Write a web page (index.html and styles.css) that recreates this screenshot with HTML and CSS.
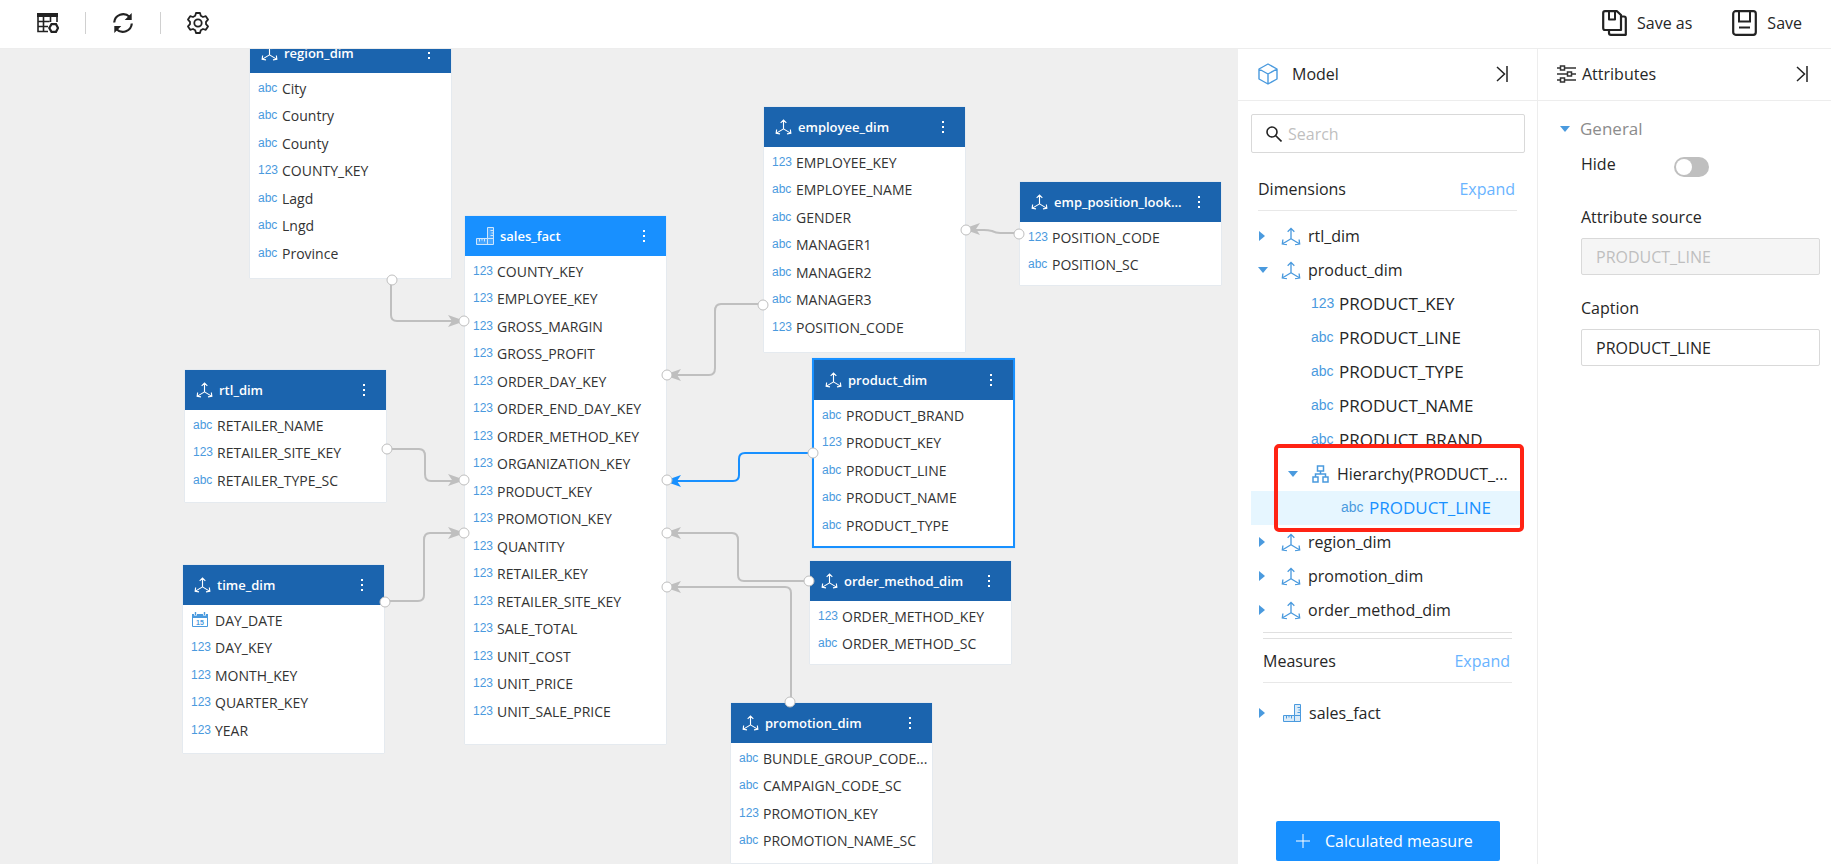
FILE: index.html
```html
<!DOCTYPE html>
<html lang="en">
<head>
<meta charset="utf-8">
<title>Data model editor</title>
<link rel="stylesheet" href="styles.css">
</head>
<body>
<svg class="sprite" aria-hidden="true">
  <symbol id="axis" viewBox="0 0 18 17"><path d="M9 10.500V1.500M9 10.500L1.500 15M9 10.500L16.500 15M6 4.200L9 1.200L12 4.200M1.700 11.200L1.200 15.200L5.300 15.800M16.300 11.200L16.800 15.200L12.700 15.800"/></symbol>
  <symbol id="ruler" viewBox="0 0 18 18"><path class="soft" d="M11.500 .5H17.500V17.500H.5V11.500H11.500Z"/><path d="M11.500 .5H17.500V17.500H.5V11.500H11.500ZM11.500 11.500H17M11.500 11.500V17M14.500 3.500H17M15.500 6H17M14.500 8.500H17M3.500 12V14.500M6 12V13.500M8.500 12V14.500"/></symbol>
  <symbol id="collapse" viewBox="0 0 12 16"><path d="M1 1L8.500 8L1 15M11 0V16"/></symbol>
  <symbol id="more" viewBox="0 0 4 14"><path d="M1 1H3V3H1ZM1 6H3V8H1ZM1 11H3V13H1Z"/></symbol>
</svg>

<header class="topbar">
  <div class="tools">
    <button class="tool" aria-label="Table settings"><svg class="icon-tool" viewBox="0 0 22 22"><path fill="#222" d="M0 1H21V5H0Z"/><path fill="none" stroke="#222" stroke-width="1.600" d="M1 4V19.500H11M6.500 5V19.500M13.500 5V10M20 5V10M1 9.500H12.500M1 14.500H11"/><path fill="none" stroke="#222" stroke-width="2.200" d="M14.500 12.200H19L21 16L19 19.800H14.500L12.300 16Z"/></svg></button>
    <button class="tool" aria-label="Refresh"><svg class="icon-tool" viewBox="0 0 22 22"><path fill="none" stroke="#222" stroke-width="2.200" d="M2.200 10.500A9 9 0 0 1 17.500 4.800M19.800 11.500A9 9 0 0 1 4.500 17.200"/><path fill="#222" d="M19.700 1V8H12.700ZM2.300 21V14H9.300Z"/></svg></button>
    <button class="tool" aria-label="Settings"><svg class="icon-tool" viewBox="0 0 22 22"><path fill="none" stroke="#222" stroke-width="1.800" stroke-linejoin="round" d="M9 1H13L13.800 3.800L16 5L18.800 4.200L21 7.600L19 9.800V12.200L21 14.400L18.800 17.800L16 17L13.800 18.200L13 21H9L8.200 18.200L6 17L3.200 17.800L1 14.400L3 12.200V9.800L1 7.600L3.200 4.200L6 5L8.200 3.800Z"/><circle cx="11" cy="11" r="3.700" fill="none" stroke="#222" stroke-width="1.800"/></svg></button>
  </div>
  <div class="saves">
    <button class="save"><svg class="icon-save" viewBox="0 0 25 26" fill="none" stroke="#222" stroke-width="2.200" stroke-linejoin="round"><path d="M3 1.200H15L19 5V20H3Q1.200 20 1.200 18V3Q1.200 1.200 3 1.200Z"/><path stroke-width="2" d="M7 2V9.500H13V2"/><path d="M19.500 6.500H22Q23.800 6.500 23.800 8.500V24.800H9Q7 24.800 7 23V20.500"/></svg>Save as</button>
    <button class="save"><svg class="icon-save" viewBox="0 0 25 26" fill="none" stroke="#222" stroke-width="2.200"><rect x="1.200" y="1.200" width="22.600" height="23.600" rx="2.500"/><path stroke-width="2" d="M7 2V11.500H18V2M7 17.500H18"/></svg>Save</button>
  </div>
</header>

<div class="workspace">
  <main class="canvas">
    <svg class="links" aria-hidden="true">
      <g class="link">
        <path d="M391 230V266Q391 272 397 272H460"/>
        <path d="M387 400H419Q425 400 425 407V425Q425 432 431 432H460"/>
        <path d="M385 552H418Q424 552 424 546V491Q424 484 430 484H460"/>
        <path d="M763 255H721Q715 255 715 262V319Q715 326 709 326H671"/>
        <path d="M809 532H744Q738 532 738 526V491Q738 484 732 484H671"/>
        <path d="M791 653V544Q791 538 785 538H671"/>
        <path d="M1019 184H1000Q996 184 992 182Q988 181 984 181H970"/>
      </g>
      <path class="link link-active" d="M812 404H745Q739 404 739 410V426Q739 432 733 432H671"/>
      <g class="arrow">
        <path d="M448 266L465 272L448 278L452 272Z"/>
        <path d="M448 425L465 431L448 437L452 431Z"/>
        <path d="M448 478L465 484L448 490L452 484Z"/>
        <path d="M681 320L664 326L681 332L677 326Z"/>
        <path d="M681 478L664 484L681 490L677 484Z"/>
        <path d="M681 532L664 538L681 544L677 538Z"/>
        <path d="M980 174L963 180L980 186L976 180Z"/>
      </g>
      <path class="arrow arrow-active" d="M681 426L664 432L681 438L677 432Z"/>
    </svg>

    <section class="node at-region">
      <h2 class="node-head"><svg class="icon-axis"><use href="#axis"/></svg><span class="node-name">region_dim</span><button class="more" aria-label="More"><svg class="icon-more"><use href="#more"/></svg></button></h2>
      <ul class="fields">
        <li><i>abc</i>City</li><li><i>abc</i>Country</li><li><i>abc</i>County</li><li><i>123</i>COUNTY_KEY</li><li><i>abc</i>Lagd</li><li><i>abc</i>Lngd</li><li><i>abc</i>Province</li>
      </ul>
    </section>

    <section class="node at-rtl">
      <h2 class="node-head"><svg class="icon-axis"><use href="#axis"/></svg><span class="node-name">rtl_dim</span><button class="more" aria-label="More"><svg class="icon-more"><use href="#more"/></svg></button></h2>
      <ul class="fields">
        <li><i>abc</i>RETAILER_NAME</li><li><i>123</i>RETAILER_SITE_KEY</li><li><i>abc</i>RETAILER_TYPE_SC</li>
      </ul>
    </section>

    <section class="node at-time">
      <h2 class="node-head"><svg class="icon-axis"><use href="#axis"/></svg><span class="node-name">time_dim</span><button class="more" aria-label="More"><svg class="icon-more"><use href="#more"/></svg></button></h2>
      <ul class="fields">
        <li><i><svg class="icon-date" viewBox="0 0 18 15"><path fill="#4a9ade" d="M1 2H17V6H1Z"/><path fill="none" stroke="#4a9ade" d="M1.500 2.500H16.500V14.500H1.500Z"/><path stroke="#fff" stroke-width="3" d="M4.500 0V3.500M13.500 0V3.500"/><path stroke="#4a9ade" stroke-width="1.400" d="M4.500 0V3M13.500 0V3"/><text x="9" y="12.500" text-anchor="middle" class="date-num">15</text></svg></i>DAY_DATE</li><li><i>123</i>DAY_KEY</li><li><i>123</i>MONTH_KEY</li><li><i>123</i>QUARTER_KEY</li><li><i>123</i>YEAR</li>
      </ul>
    </section>

    <section class="node node-fact at-sales">
      <h2 class="node-head"><svg class="icon-ruler"><use href="#ruler"/></svg><span class="node-name">sales_fact</span><button class="more" aria-label="More"><svg class="icon-more"><use href="#more"/></svg></button></h2>
      <ul class="fields">
        <li><i>123</i>COUNTY_KEY</li><li><i>123</i>EMPLOYEE_KEY</li><li><i>123</i>GROSS_MARGIN</li><li><i>123</i>GROSS_PROFIT</li><li><i>123</i>ORDER_DAY_KEY</li><li><i>123</i>ORDER_END_DAY_KEY</li><li><i>123</i>ORDER_METHOD_KEY</li><li><i>123</i>ORGANIZATION_KEY</li><li><i>123</i>PRODUCT_KEY</li><li><i>123</i>PROMOTION_KEY</li><li><i>123</i>QUANTITY</li><li><i>123</i>RETAILER_KEY</li><li><i>123</i>RETAILER_SITE_KEY</li><li><i>123</i>SALE_TOTAL</li><li><i>123</i>UNIT_COST</li><li><i>123</i>UNIT_PRICE</li><li><i>123</i>UNIT_SALE_PRICE</li>
      </ul>
    </section>

    <section class="node at-employee">
      <h2 class="node-head"><svg class="icon-axis"><use href="#axis"/></svg><span class="node-name">employee_dim</span><button class="more" aria-label="More"><svg class="icon-more"><use href="#more"/></svg></button></h2>
      <ul class="fields">
        <li><i>123</i>EMPLOYEE_KEY</li><li><i>abc</i>EMPLOYEE_NAME</li><li><i>abc</i>GENDER</li><li><i>abc</i>MANAGER1</li><li><i>abc</i>MANAGER2</li><li><i>abc</i>MANAGER3</li><li><i>123</i>POSITION_CODE</li>
      </ul>
    </section>

    <section class="node at-position">
      <h2 class="node-head"><svg class="icon-axis"><use href="#axis"/></svg><span class="node-name">emp_position_look...</span><button class="more" aria-label="More"><svg class="icon-more"><use href="#more"/></svg></button></h2>
      <ul class="fields">
        <li><i>123</i>POSITION_CODE</li><li><i>abc</i>POSITION_SC</li>
      </ul>
    </section>

    <section class="node node-selected at-product">
      <h2 class="node-head"><svg class="icon-axis"><use href="#axis"/></svg><span class="node-name">product_dim</span><button class="more" aria-label="More"><svg class="icon-more"><use href="#more"/></svg></button></h2>
      <ul class="fields">
        <li><i>abc</i>PRODUCT_BRAND</li><li><i>123</i>PRODUCT_KEY</li><li><i>abc</i>PRODUCT_LINE</li><li><i>abc</i>PRODUCT_NAME</li><li><i>abc</i>PRODUCT_TYPE</li>
      </ul>
    </section>

    <section class="node at-order">
      <h2 class="node-head"><svg class="icon-axis"><use href="#axis"/></svg><span class="node-name">order_method_dim</span><button class="more" aria-label="More"><svg class="icon-more"><use href="#more"/></svg></button></h2>
      <ul class="fields">
        <li><i>123</i>ORDER_METHOD_KEY</li><li><i>abc</i>ORDER_METHOD_SC</li>
      </ul>
    </section>

    <section class="node at-promotion">
      <h2 class="node-head"><svg class="icon-axis"><use href="#axis"/></svg><span class="node-name">promotion_dim</span><button class="more" aria-label="More"><svg class="icon-more"><use href="#more"/></svg></button></h2>
      <ul class="fields">
        <li><i>abc</i>BUNDLE_GROUP_CODE...</li><li><i>abc</i>CAMPAIGN_CODE_SC</li><li><i>123</i>PROMOTION_KEY</li><li><i>abc</i>PROMOTION_NAME_SC</li>
      </ul>
    </section>

    <svg class="links ports" aria-hidden="true">
      <circle cx="392" cy="231" r="5"/><circle cx="464" cy="272" r="5"/>
      <circle cx="387" cy="400" r="5"/><circle cx="464" cy="431" r="5"/>
      <circle cx="385" cy="553" r="5"/><circle cx="464" cy="484" r="5"/>
      <circle cx="763" cy="256" r="5"/><circle cx="667" cy="326" r="5"/>
      <circle cx="813" cy="404" r="5"/><circle cx="667" cy="431" r="5"/>
      <circle cx="809" cy="532" r="5"/><circle cx="667" cy="484" r="5"/>
      <circle cx="790" cy="653" r="5"/><circle cx="667" cy="538" r="5"/>
      <circle cx="1019" cy="185" r="5"/><circle cx="966" cy="181" r="5"/>
    </svg>
  </main>

  <aside class="panel model">
    <div class="panel-head">
      <svg class="icon-cube" viewBox="0 0 20 22"><path d="M10 1L19 6V16L10 21L1 16V6ZM1 6L10 11L19 6M10 11V21"/></svg>
      <h2 class="panel-title model-title">Model</h2>
      <button class="collapse" aria-label="Collapse model"><svg class="icon-collapse"><use href="#collapse"/></svg></button>
    </div>
    <div class="model-body">
      <label class="search"><svg class="icon-search" viewBox="0 0 16 16"><circle cx="6" cy="6" r="5"/><path d="M9.500 9.500L15.500 15.500"/></svg><input type="text" placeholder="Search" aria-label="Search"></label>
      <div class="group-head"><h3>Dimensions</h3><a href="#dimensions">Expand</a></div>
      <ul class="tree" id="dimensions">
        <li class="row"><button class="caret" aria-label="Open rtl_dim"></button><svg class="icon-axis"><use href="#axis"/></svg><span>rtl_dim</span></li>
        <li class="row"><button class="caret caret-open" aria-label="Close product_dim"></button><svg class="icon-axis"><use href="#axis"/></svg><span>product_dim</span></li>
        <li class="row leaf"><i>123</i><span>PRODUCT_KEY</span></li>
        <li class="row leaf"><i>abc</i><span>PRODUCT_LINE</span></li>
        <li class="row leaf"><i>abc</i><span>PRODUCT_TYPE</span></li>
        <li class="row leaf"><i>abc</i><span>PRODUCT_NAME</span></li>
        <li class="row leaf"><i>abc</i><span>PRODUCT_BRAND</span></li>
        <li class="marked">
          <div class="row nested"><button class="caret caret-open" aria-label="Close hierarchy"></button><svg class="icon-tree" viewBox="0 0 17 18"><path d="M5.500 1H11.500V6H5.500ZM1 12H6V17H1ZM11 12H16V17H11ZM8.500 6V9M3.500 12V9H13.500V12"/></svg><span>Hierarchy(PRODUCT_...</span></div>
          <div class="row leaf leaf-deep current"><i>abc</i><span>PRODUCT_LINE</span></div>
        </li>
        <li class="row"><button class="caret" aria-label="Open region_dim"></button><svg class="icon-axis"><use href="#axis"/></svg><span>region_dim</span></li>
        <li class="row"><button class="caret" aria-label="Open promotion_dim"></button><svg class="icon-axis"><use href="#axis"/></svg><span>promotion_dim</span></li>
        <li class="row"><button class="caret" aria-label="Open order_method_dim"></button><svg class="icon-axis"><use href="#axis"/></svg><span>order_method_dim</span></li>
      </ul>
      <div class="splitter"></div>
      <div class="group-head group-measures"><h3>Measures</h3><a href="#measures">Expand</a></div>
      <ul class="tree tree-measures" id="measures">
        <li class="row"><button class="caret" aria-label="Open sales_fact"></button><svg class="icon-ruler"><use href="#ruler"/></svg><span>sales_fact</span></li>
      </ul>
      <button class="primary"><svg class="icon-plus" viewBox="0 0 14 14"><path d="M7 0V14M0 7H14"/></svg>Calculated measure</button>
    </div>
  </aside>

  <aside class="panel attributes">
    <div class="panel-head">
      <svg class="icon-sliders" viewBox="0 0 19 18"><path d="M0 3H3M8 3H19M0 9H10M15 9H19M0 15H3M8 15H19M3.500 1H7.500V5H3.500ZM10.500 7H14.500V11H10.500ZM3.500 13H7.500V17H3.500Z"/></svg>
      <h2 class="panel-title">Attributes</h2>
      <button class="collapse" aria-label="Collapse attributes"><svg class="icon-collapse"><use href="#collapse"/></svg></button>
    </div>
    <div class="general"><button class="caret caret-open" aria-label="Close general"></button><h3>General</h3></div>
    <form class="form">
      <div class="hide-row"><label for="hide">Hide</label><input class="switch" id="hide" type="checkbox" role="switch"></div>
      <div class="field"><label for="source">Attribute source</label><input id="source" type="text" value="PRODUCT_LINE" disabled></div>
      <div class="field"><label for="caption">Caption</label><input id="caption" type="text" value="PRODUCT_LINE"></div>
    </form>
  </aside>
</div>
</body>
</html>
```
FILE: styles.css
```css
* { box-sizing: border-box; }

body {
  margin: 0;
  height: 100vh;
  display: flex;
  flex-direction: column;
  overflow: hidden;
  background: #fff;
  color: #262626;
  font: 16px/24px "Open Sans", "Noto Sans", sans-serif;
}

h2, h3, ul { margin: 0; padding: 0; font-weight: 400; font-size: inherit; }
ul { list-style: none; }
i { font-style: normal; font-family: "Liberation Sans", Arial, sans-serif; color: #4a9ade; }
svg { display: block; flex: none; }
button {
  margin: 0;
  padding: 0;
  border: 0;
  background: none;
  color: inherit;
  font: inherit;
  cursor: pointer;
}
input { font: inherit; color: inherit; }
a { color: #69b4ff; text-decoration: none; }
.sprite { position: absolute; width: 0; height: 0; }

/* Top bar */
.topbar {
  flex: none;
  display: flex;
  align-items: center;
  justify-content: space-between;
  height: 49px;
  padding: 0 29px 2px 10px;
  border-bottom: 1px solid #ededed;
}
.tools, .saves { display: flex; align-items: center; }
.tool { display: flex; justify-content: center; width: 75px; height: 22px; }
.tool + .tool { border-left: 1px solid #d0d0d0; }
.icon-tool { width: 22px; height: 22px; }
.saves { gap: 40px; }
.save { display: flex; align-items: center; gap: 10px; }
.icon-save { width: 25px; height: 26px; }

.workspace { flex: 1; display: flex; min-height: 0; }

/* Diagram */
.canvas { flex: 1; position: relative; overflow: hidden; background: #efefef; }
.links { position: absolute; inset: 0; width: 100%; height: 100%; pointer-events: none; }
.link { fill: none; stroke: #bfbfbf; stroke-width: 2; }
.link-active { stroke: #1890ff; }
.arrow { fill: #bfbfbf; }
.arrow-active { fill: #1890ff; }
.ports { fill: #fff; stroke: #bfbfbf; }

.node {
  position: absolute;
  width: 201px;
  padding-bottom: 6px;
  background: #fff;
  box-shadow: 0 0 1px #b8d4f0;
}
.at-region { left: 250px; top: -16px; padding-bottom: 11px; }
.at-rtl { left: 185px; top: 321px; padding-bottom: 8px; }
.at-time { left: 183px; top: 516px; padding-bottom: 9px; }
.at-sales { left: 465px; top: 167px; padding-bottom: 19px; }
.at-employee { left: 764px; top: 58px; padding-bottom: 11px; }
.at-position { left: 1020px; top: 133px; }
.at-product { left: 812px; top: 309px; padding-bottom: 7px; }
.at-order { left: 810px; top: 512px; }
.at-promotion { left: 731px; top: 654px; padding-bottom: 8px; }

.node-head {
  display: flex;
  align-items: center;
  height: 40px;
  padding: 0 20px 0 11px;
  background: #1b64ae;
  color: #fff;
  font-size: 13px;
  font-weight: 600;
}
.node-fact .node-head { background: #1890ff; }
.node-selected { width: 203px; border: 2px solid #1890ff; }
.node-name { flex: 1; padding-left: 6px; white-space: nowrap; }
.icon-axis { width: 17px; height: 16px; fill: none; stroke: #4a9ade; stroke-width: 1.2; }
.icon-ruler { width: 18px; height: 18px; fill: none; stroke: #4a9ade; color: #4a9ade; stroke-width: 1; }
.soft { fill: currentColor; fill-opacity: .2; stroke: none; }
.node-head .icon-axis { stroke: #fff; }
.node-head .icon-ruler { stroke: #cfe6fc; color: #fff; }
.more { width: 4px; height: 14px; }
.icon-more { width: 4px; height: 14px; fill: #fff; }

.fields { padding: 2px 0 0 8px; font-size: 14px; color: #333; }
.fields li { display: flex; align-items: center; height: 27px; white-space: nowrap; }
.fields li:nth-child(even) { height: 28px; }
.fields i { width: 24px; padding-bottom: 2px; font-size: 12px; line-height: 16px; }
.icon-date { width: 18px; height: 15px; }
.date-num { font: bold 7px "Liberation Sans", sans-serif; fill: #4a9ade; }

/* Side panels */
.panel { flex: none; display: flex; flex-direction: column; background: #fff; }
.model { width: 300px; border-right: 1px solid #ededed; }
.attributes { width: 293px; }
.panel-head {
  display: flex;
  align-items: center;
  height: 52px;
  padding: 0 29px 2px 20px;
  border-bottom: 1px solid #ededed;
}
.attributes .panel-head { padding: 0 23px 2px 19px; }
.panel-title { flex: 1; padding-left: 6px; }
.model-title { padding-left: 14px; }
.icon-cube { width: 20px; height: 22px; fill: none; stroke: #4a9ade; stroke-width: 1.4; stroke-linejoin: round; }
.icon-sliders { width: 19px; height: 18px; fill: none; stroke: #333; stroke-width: 1.5; }
.icon-collapse { width: 12px; height: 16px; fill: none; stroke: #222; stroke-width: 1.5; }

.model-body { flex: 1; display: flex; flex-direction: column; padding: 13px 12px 3px 13px; }
.search {
  display: flex;
  align-items: center;
  height: 39px;
  padding: 0 14px;
  border: 1px solid #d9d9d9;
  border-radius: 2px;
}
.search input { flex: 1; min-width: 0; padding: 0 0 0 6px; border: 0; outline: 0; background: none; }
.search input::placeholder { color: #bfbfbf; opacity: 1; }
.icon-search { width: 16px; height: 16px; fill: none; stroke: #222; stroke-width: 1.6; }

.group-head {
  display: flex;
  align-items: center;
  justify-content: space-between;
  height: 43px;
  margin: 15px 8px 0 7px;
  padding-right: 2px;
  border-bottom: 1px solid #e8e8e8;
}
.group-measures { height: 44px; margin: 0 13px 0 12px; }
.splitter { height: 7px; margin: 5px 13px 0 12px; border: solid #e0e0e0; border-width: 1px 0; }

.tree { padding-top: 8px; margin-right: 4px; }
.tree-measures { padding-top: 13px; }
.row { display: flex; align-items: center; height: 34px; padding-left: 7px; white-space: nowrap; }
.row .icon-axis { width: 20px; height: 19px; margin: 0 7px 0 14px; }
.row .icon-ruler { margin: 0 8px 0 16px; }
.caret { width: 9px; height: 10px; }
.caret::before {
  content: "";
  display: block;
  width: 0;
  margin-left: 1px;
  border: solid transparent;
  border-width: 5px 0 5px 6px;
  border-left-color: #4a9ade;
}
.caret-open::before { margin: 2px 0; border-width: 6px 5px 0; border-color: #4a9ade transparent transparent; }
.leaf { padding-left: 60px; }
.leaf i { width: 28px; padding-bottom: 2px; font-size: 14px; line-height: 18px; }
.leaf span { font-size: 17px; }
.nested { padding-left: 37px; }
.icon-tree { width: 17px; height: 18px; margin: 0 8px 0 15px; fill: none; stroke: #4a9ade; stroke-width: 1.5; }
.leaf-deep { padding-left: 90px; }
.current { background: #e6f6ff; color: #1890ff; }

/* Callout drawn around the selected hierarchy */
.marked { position: relative; }
.marked::after {
  content: "";
  position: absolute;
  inset: -13px -3px -7px 23px;
  border: 4px solid #ff2314;
  border-radius: 5px;
  pointer-events: none;
}

.primary {
  display: flex;
  align-items: center;
  height: 40px;
  margin: auto 25px 0;
  padding-left: 20px;
  border-radius: 2px;
  background: #1890ff;
  color: #fff;
  white-space: nowrap;
}
.icon-plus { width: 14px; height: 14px; margin-right: 15px; fill: none; stroke: #fff; }

/* Attributes */
.general { display: flex; align-items: center; gap: 11px; padding: 16px 22px 0; color: #8c8c8c; font-size: 17px; }
.form { padding: 11px 11px 0 43px; }
.hide-row { display: flex; height: 27px; }
.hide-row label { width: 93px; }
.switch {
  appearance: none;
  width: 35px;
  height: 20px;
  margin: 5px 0 0;
  padding: 2px;
  border-radius: 10px;
  background: #bfbfbf;
}
.switch::before { content: ""; display: block; width: 16px; height: 16px; border-radius: 50%; background: #fff; }
.switch:checked { background: #1890ff; }
.switch:checked::before { margin-left: auto; }
.field { display: flex; flex-direction: column; gap: 9px; padding-top: 26px; }
.field + .field { padding-top: 21px; }
.field input {
  width: 100%;
  height: 37px;
  padding: 0 14px;
  border: 1px solid #d9d9d9;
  border-radius: 2px;
  background: #fff;
}
.field input:disabled { background: #f5f5f5; color: #bfbfbf; }
```
